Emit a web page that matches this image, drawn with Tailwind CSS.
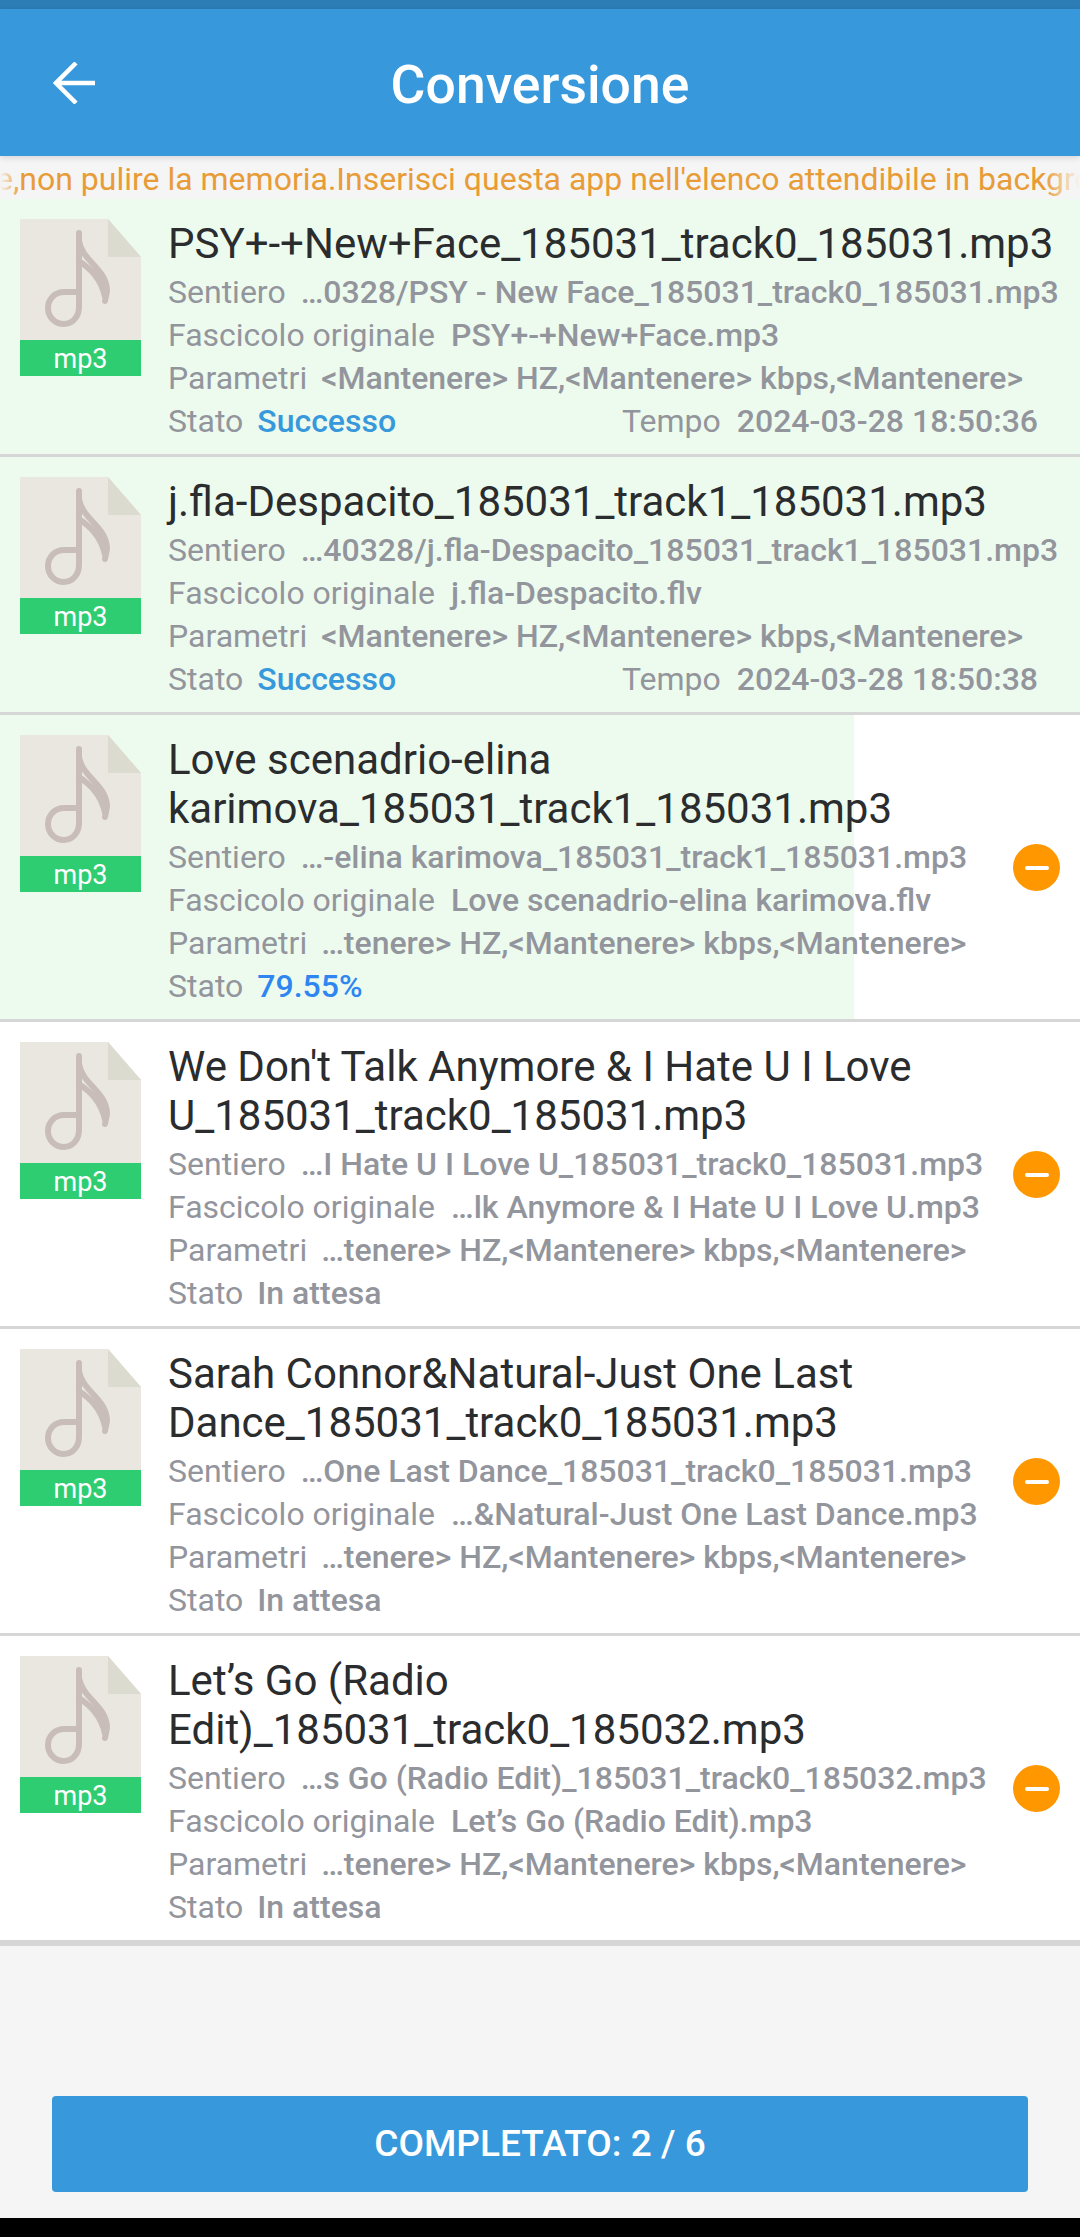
<!DOCTYPE html>
<html lang="it">
<head>
<meta charset="UTF-8">
<meta name="viewport" content="width=device-width, initial-scale=1.0">
<title>Conversione</title>
<script src="https://cdn.jsdelivr.net/npm/@tailwindcss/browser@4"></script>
</head>
<body class="bg-black font-['Roboto',sans-serif]">
<div class="w-[1080px] h-[2237px] flex flex-col overflow-hidden">
  <!-- status bar + toolbar -->
  <div class="h-[9px] bg-[#2c7cb6]"></div>
  <header class="relative z-10 h-[147px] bg-[#3798db] flex items-center justify-center shadow-[0_2px_6px_rgba(0,0,0,0.12)]">
    <svg class="absolute left-[53px] top-[53px] w-[42px] h-[42px]" viewBox="0 0 42 42" fill="none" stroke="#fff" stroke-width="4.500"><path d="M42 21H3M23 1 3 21 23 41"/></svg>
    <h1 class="text-white text-[53.500px] font-medium leading-none mt-[4px]">Conversione</h1>
  </header>

  <!-- marquee -->
  <div class="relative h-[43px] bg-[#f5f5f5] overflow-hidden">
    <p class="absolute left-[-4px] top-[2px] whitespace-nowrap text-[#e89c37] text-[32px] leading-[43px]">e,non pulire la memoria.Inserisci questa app nell'elenco attendibile in background</p>
    <div class="absolute left-0 top-0 w-[20px] h-full bg-gradient-to-r from-[#f5f5f5] to-transparent"></div>
    <div class="absolute right-0 top-0 w-[36px] h-full bg-gradient-to-l from-[#f5f5f5] to-transparent"></div>
  </div>

  <main class="flex-1 bg-[#f5f5f5] flex flex-col">
    <ul class="border-b-[3px] border-[#d6d6d6]">
      <!-- row 1 -->
      <li class="relative bg-[#edfbee] border-b-[3px] border-[#d6d6d6] h-[258px] flex pl-[20px] pt-[20px]">
        <svg class="shrink-0 w-[121px] h-[157px]" viewBox="0 0 121 157">
          <path d="M0 0H88L121 38V125H0Z" fill="#e9e7e0"/><path d="M88 0 121 38H88Z" fill="#dcdbd0"/>
          <path d="M59 14V88C59 98 52 105 44 105 35 105 28 98 28 89 28 80 35 73 44 73H59M59 22C62 42 87 50 87 72L85 82M59 42C68 48 81 58 85 78" fill="none" stroke="#c9bdba" stroke-width="6" stroke-linecap="round"/>
          <rect y="121" width="121" height="36" fill="#2ecd71"/>
          <text x="60.500" y="149" text-anchor="middle" fill="#fff" font-size="27" font-family="Roboto">mp3</text>
        </svg>
        <div class="relative ml-[27px] flex-1 min-w-0">
          <h2 class="mb-[3px] text-[#2a2c2e] text-[42px] leading-[49px] whitespace-nowrap">PSY+-+New+Face_185031_track0_185031.mp3</h2>
          <p class="whitespace-nowrap text-[#93959d] text-[32px] leading-[43px]">Sentiero<b class="ml-[15px] font-medium">…0328/PSY - New Face_185031_track0_185031.mp3</b></p>
          <p class="whitespace-nowrap text-[#93959d] text-[32px] leading-[43px]">Fascicolo originale<b class="ml-[16px] font-medium">PSY+-+New+Face.mp3</b></p>
          <p class="whitespace-nowrap text-[#93959d] text-[32px] leading-[43px]">Parametri<b class="ml-[14px] font-medium">&lt;Mantenere&gt; HZ,&lt;Mantenere&gt; kbps,&lt;Mantenere&gt;</b></p>
          <div class="flex justify-between pr-[42px] text-[#93959d] text-[32px] leading-[43px]"><p>Stato<b class="ml-[14px] font-medium text-[#3798db]">Successo</b></p><p>Tempo<b class="ml-[16px] font-medium">2024-03-28 18:50:36</b></p></div>
        </div>
      </li>
      <!-- row 2 -->
      <li class="relative bg-[#edfbee] border-b-[3px] border-[#d6d6d6] h-[258px] flex pl-[20px] pt-[20px]">
        <svg class="shrink-0 w-[121px] h-[157px]" viewBox="0 0 121 157">
          <path d="M0 0H88L121 38V125H0Z" fill="#e9e7e0"/><path d="M88 0 121 38H88Z" fill="#dcdbd0"/>
          <path d="M59 14V88C59 98 52 105 44 105 35 105 28 98 28 89 28 80 35 73 44 73H59M59 22C62 42 87 50 87 72L85 82M59 42C68 48 81 58 85 78" fill="none" stroke="#c9bdba" stroke-width="6" stroke-linecap="round"/>
          <rect y="121" width="121" height="36" fill="#2ecd71"/>
          <text x="60.500" y="149" text-anchor="middle" fill="#fff" font-size="27" font-family="Roboto">mp3</text>
        </svg>
        <div class="relative ml-[27px] flex-1 min-w-0">
          <h2 class="mb-[3px] text-[#2a2c2e] text-[42px] leading-[49px] whitespace-nowrap">j.fla-Despacito_185031_track1_185031.mp3</h2>
          <p class="whitespace-nowrap text-[#93959d] text-[32px] leading-[43px]">Sentiero<b class="ml-[15px] font-medium">…40328/j.fla-Despacito_185031_track1_185031.mp3</b></p>
          <p class="whitespace-nowrap text-[#93959d] text-[32px] leading-[43px]">Fascicolo originale<b class="ml-[16px] font-medium">j.fla-Despacito.flv</b></p>
          <p class="whitespace-nowrap text-[#93959d] text-[32px] leading-[43px]">Parametri<b class="ml-[14px] font-medium">&lt;Mantenere&gt; HZ,&lt;Mantenere&gt; kbps,&lt;Mantenere&gt;</b></p>
          <div class="flex justify-between pr-[42px] text-[#93959d] text-[32px] leading-[43px]"><p>Stato<b class="ml-[14px] font-medium text-[#3798db]">Successo</b></p><p>Tempo<b class="ml-[16px] font-medium">2024-03-28 18:50:38</b></p></div>
        </div>
      </li>
      <!-- row 3, 79.55% -->
      <li class="relative bg-white border-b-[3px] border-[#d6d6d6] h-[307px] flex items-start pl-[20px] pt-[20px]">
        <div class="absolute left-0 top-0 w-[854px] h-full bg-[#edfbee]"></div>
        <svg class="relative shrink-0 w-[121px] h-[157px]" viewBox="0 0 121 157">
          <path d="M0 0H88L121 38V125H0Z" fill="#e9e7e0"/><path d="M88 0 121 38H88Z" fill="#dcdbd0"/>
          <path d="M59 14V88C59 98 52 105 44 105 35 105 28 98 28 89 28 80 35 73 44 73H59M59 22C62 42 87 50 87 72L85 82M59 42C68 48 81 58 85 78" fill="none" stroke="#c9bdba" stroke-width="6" stroke-linecap="round"/>
          <rect y="121" width="121" height="36" fill="#2ecd71"/>
          <text x="60.500" y="149" text-anchor="middle" fill="#fff" font-size="27" font-family="Roboto">mp3</text>
        </svg>
        <div class="relative ml-[27px] w-[820px]">
          <h2 class="mb-[3px] text-[#2a2c2e] text-[42px] leading-[49px]">Love scenadrio-elina karimova_185031_track1_185031.mp3</h2>
          <p class="whitespace-nowrap text-[#93959d] text-[32px] leading-[43px]">Sentiero<b class="ml-[15px] font-medium">…-elina karimova_185031_track1_185031.mp3</b></p>
          <p class="whitespace-nowrap text-[#93959d] text-[32px] leading-[43px]">Fascicolo originale<b class="ml-[16px] font-medium">Love scenadrio-elina karimova.flv</b></p>
          <p class="whitespace-nowrap text-[#93959d] text-[32px] leading-[43px]">Parametri<b class="ml-[14px] font-medium">…tenere&gt; HZ,&lt;Mantenere&gt; kbps,&lt;Mantenere&gt;</b></p>
          <p class="text-[#93959d] text-[32px] leading-[43px]">Stato<b class="ml-[14px] font-medium text-[#2f86f0]">79.55%</b></p>
        </div>
        <span class="absolute left-[1013px] top-[129px] w-[47px] h-[47px] rounded-full bg-[#ff9700] flex items-center justify-center"><span class="w-[24px] h-[4px] rounded-full bg-white"></span></span>
      </li>
      <!-- row 4 -->
      <li class="relative bg-white border-b-[3px] border-[#d6d6d6] h-[307px] flex items-start pl-[20px] pt-[20px]">
        <svg class="shrink-0 w-[121px] h-[157px]" viewBox="0 0 121 157">
          <path d="M0 0H88L121 38V125H0Z" fill="#e9e7e0"/><path d="M88 0 121 38H88Z" fill="#dcdbd0"/>
          <path d="M59 14V88C59 98 52 105 44 105 35 105 28 98 28 89 28 80 35 73 44 73H59M59 22C62 42 87 50 87 72L85 82M59 42C68 48 81 58 85 78" fill="none" stroke="#c9bdba" stroke-width="6" stroke-linecap="round"/>
          <rect y="121" width="121" height="36" fill="#2ecd71"/>
          <text x="60.500" y="149" text-anchor="middle" fill="#fff" font-size="27" font-family="Roboto">mp3</text>
        </svg>
        <div class="ml-[27px] w-[820px]">
          <h2 class="mb-[3px] text-[#2a2c2e] text-[42px] leading-[49px]">We Don't Talk Anymore &amp; I Hate U I Love U_185031_track0_185031.mp3</h2>
          <p class="whitespace-nowrap text-[#93959d] text-[32px] leading-[43px]">Sentiero<b class="ml-[15px] font-medium">…I Hate U I Love U_185031_track0_185031.mp3</b></p>
          <p class="whitespace-nowrap text-[#93959d] text-[32px] leading-[43px]">Fascicolo originale<b class="ml-[16px] font-medium">…lk Anymore &amp; I Hate U I Love U.mp3</b></p>
          <p class="whitespace-nowrap text-[#93959d] text-[32px] leading-[43px]">Parametri<b class="ml-[14px] font-medium">…tenere&gt; HZ,&lt;Mantenere&gt; kbps,&lt;Mantenere&gt;</b></p>
          <p class="text-[#93959d] text-[32px] leading-[43px]">Stato<b class="ml-[14px] font-medium">In attesa</b></p>
        </div>
        <span class="absolute left-[1013px] top-[129px] w-[47px] h-[47px] rounded-full bg-[#ff9700] flex items-center justify-center"><span class="w-[24px] h-[4px] rounded-full bg-white"></span></span>
      </li>
      <!-- row 5 -->
      <li class="relative bg-white border-b-[3px] border-[#d6d6d6] h-[307px] flex items-start pl-[20px] pt-[20px]">
        <svg class="shrink-0 w-[121px] h-[157px]" viewBox="0 0 121 157">
          <path d="M0 0H88L121 38V125H0Z" fill="#e9e7e0"/><path d="M88 0 121 38H88Z" fill="#dcdbd0"/>
          <path d="M59 14V88C59 98 52 105 44 105 35 105 28 98 28 89 28 80 35 73 44 73H59M59 22C62 42 87 50 87 72L85 82M59 42C68 48 81 58 85 78" fill="none" stroke="#c9bdba" stroke-width="6" stroke-linecap="round"/>
          <rect y="121" width="121" height="36" fill="#2ecd71"/>
          <text x="60.500" y="149" text-anchor="middle" fill="#fff" font-size="27" font-family="Roboto">mp3</text>
        </svg>
        <div class="ml-[27px] w-[820px]">
          <h2 class="mb-[3px] text-[#2a2c2e] text-[42px] leading-[49px]">Sarah Connor&amp;Natural-Just One Last Dance_185031_track0_185031.mp3</h2>
          <p class="whitespace-nowrap text-[#93959d] text-[32px] leading-[43px]">Sentiero<b class="ml-[15px] font-medium">…One Last Dance_185031_track0_185031.mp3</b></p>
          <p class="whitespace-nowrap text-[#93959d] text-[32px] leading-[43px]">Fascicolo originale<b class="ml-[16px] font-medium">…&amp;Natural-Just One Last Dance.mp3</b></p>
          <p class="whitespace-nowrap text-[#93959d] text-[32px] leading-[43px]">Parametri<b class="ml-[14px] font-medium">…tenere&gt; HZ,&lt;Mantenere&gt; kbps,&lt;Mantenere&gt;</b></p>
          <p class="text-[#93959d] text-[32px] leading-[43px]">Stato<b class="ml-[14px] font-medium">In attesa</b></p>
        </div>
        <span class="absolute left-[1013px] top-[129px] w-[47px] h-[47px] rounded-full bg-[#ff9700] flex items-center justify-center"><span class="w-[24px] h-[4px] rounded-full bg-white"></span></span>
      </li>
      <!-- row 6 -->
      <li class="relative bg-white border-b-[3px] border-[#d6d6d6] h-[307px] flex items-start pl-[20px] pt-[20px]">
        <svg class="shrink-0 w-[121px] h-[157px]" viewBox="0 0 121 157">
          <path d="M0 0H88L121 38V125H0Z" fill="#e9e7e0"/><path d="M88 0 121 38H88Z" fill="#dcdbd0"/>
          <path d="M59 14V88C59 98 52 105 44 105 35 105 28 98 28 89 28 80 35 73 44 73H59M59 22C62 42 87 50 87 72L85 82M59 42C68 48 81 58 85 78" fill="none" stroke="#c9bdba" stroke-width="6" stroke-linecap="round"/>
          <rect y="121" width="121" height="36" fill="#2ecd71"/>
          <text x="60.500" y="149" text-anchor="middle" fill="#fff" font-size="27" font-family="Roboto">mp3</text>
        </svg>
        <div class="ml-[27px] w-[820px]">
          <h2 class="mb-[3px] text-[#2a2c2e] text-[42px] leading-[49px]">Let’s Go (Radio Edit)_185031_track0_185032.mp3</h2>
          <p class="whitespace-nowrap text-[#93959d] text-[32px] leading-[43px]">Sentiero<b class="ml-[15px] font-medium">…s Go (Radio Edit)_185031_track0_185032.mp3</b></p>
          <p class="whitespace-nowrap text-[#93959d] text-[32px] leading-[43px]">Fascicolo originale<b class="ml-[16px] font-medium">Let’s Go (Radio Edit).mp3</b></p>
          <p class="whitespace-nowrap text-[#93959d] text-[32px] leading-[43px]">Parametri<b class="ml-[14px] font-medium">…tenere&gt; HZ,&lt;Mantenere&gt; kbps,&lt;Mantenere&gt;</b></p>
          <p class="text-[#93959d] text-[32px] leading-[43px]">Stato<b class="ml-[14px] font-medium">In attesa</b></p>
        </div>
        <span class="absolute left-[1013px] top-[129px] w-[47px] h-[47px] rounded-full bg-[#ff9700] flex items-center justify-center"><span class="w-[24px] h-[4px] rounded-full bg-white"></span></span>
      </li>
    </ul>

    <div class="mt-auto px-[52px] pb-[26px]">
      <button class="w-full h-[96px] rounded-[4px] bg-[#3798db] text-white text-[37px] font-medium">COMPLETATO: 2 / 6</button>
    </div>
  </main>
  <div class="h-[19px] bg-black"></div>
</div>
</body>
</html>
